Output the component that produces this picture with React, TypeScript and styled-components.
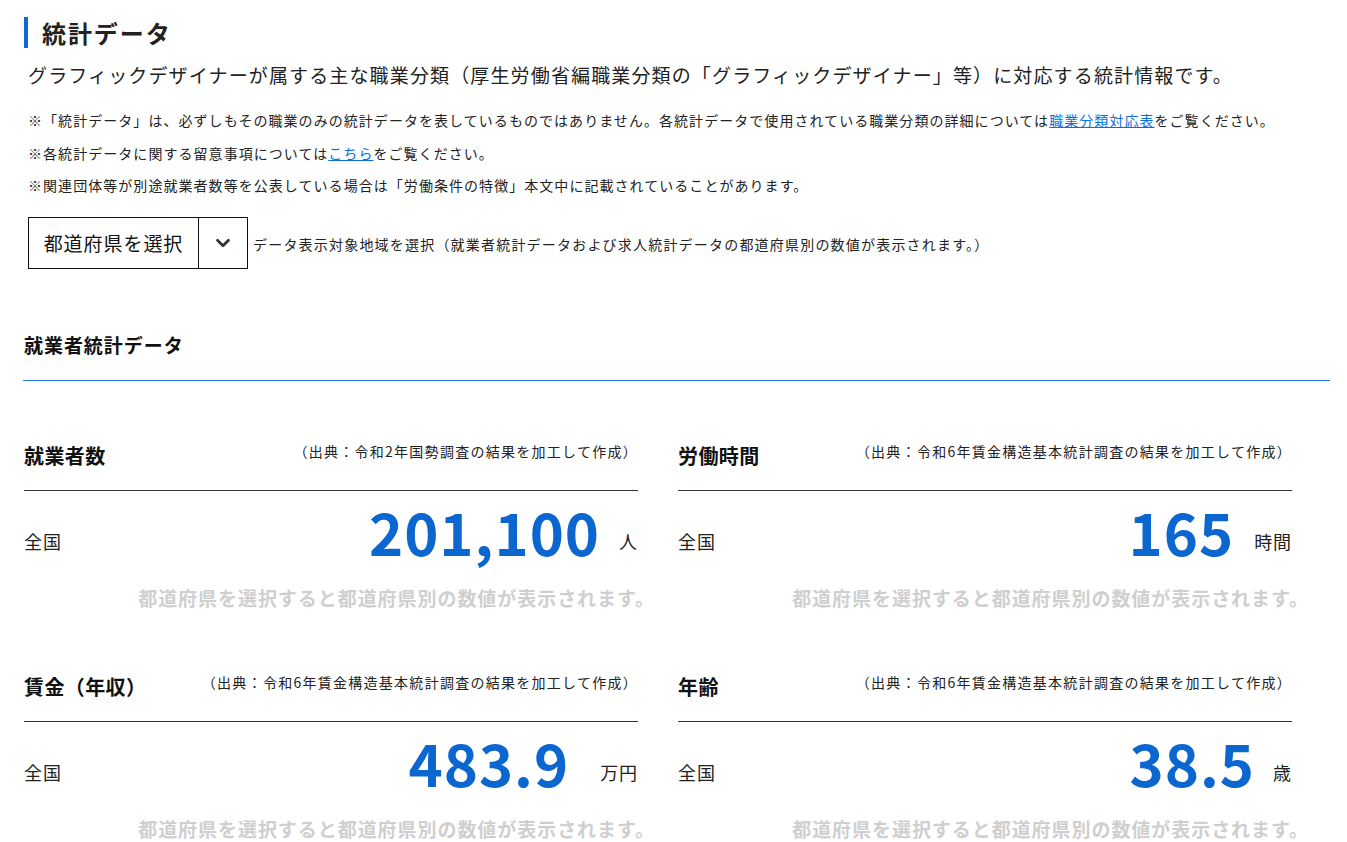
import React from 'react';
import styled, { createGlobalStyle } from 'styled-components';
import { ChevronDown } from 'lucide-react';

const GlobalStyle = createGlobalStyle`
  body {
    margin: 0;
    background: #fff;
    color: #333;
    font-family: "Noto Sans CJK JP", "Noto Sans", sans-serif;
  }
`;

const Page = styled.div`
  padding: 17px 17px 40px 23px;
`;

const Title = styled.h2`
  margin: 0 0 0 1px;
  padding-left: 14px;
  border-left: 4px solid #0b6bd3;
  font-size: 24px;
  font-weight: 700;
  line-height: 31px;
  letter-spacing: 0.08em;
  color: #222;
`;

const Intro = styled.div`
  padding-left: 5px;
`;

const Lead = styled.p`
  margin: 12px 0 0;
  font-size: 19px;
  line-height: 30px;
  letter-spacing: 0.06em;
  color: #222;
`;

const Notes = styled.ul`
  list-style: none;
  margin: 14px 0 0;
  padding: 0;
`;

const Note = styled.li`
  font-size: 14px;
  line-height: 32.5px;
  letter-spacing: 1.05px;
  color: #222;
`;

const Link = styled.a`
  color: #0a6fe0;
  text-decoration: underline;
`;

const SelectRow = styled.div`
  display: flex;
  align-items: center;
  gap: 5px;
  margin-top: 15px;
`;

const Select = styled.div`
  display: flex;
  height: 52px;
  box-sizing: border-box;
  border: 1px solid #111;
`;

const SelectLabel = styled.div`
  display: flex;
  align-items: center;
  justify-content: center;
  width: 169px;
  font-size: 19px;
  letter-spacing: 0.05em;
  color: #111;
`;

const SelectButton = styled.div`
  display: flex;
  align-items: center;
  justify-content: center;
  width: 48px;
  border-left: 1px solid #111;
  color: #333;
`;

const SelectHint = styled.span`
  font-size: 14px;
  letter-spacing: 1.2px;
  color: #222;
  padding-top: 3px;
`;

const SectionTitle = styled.h3`
  margin: 62px 0 0 1px;
  font-size: 19px;
  font-weight: 700;
  line-height: 28px;
  letter-spacing: 0.05em;
  color: #111;
`;

const SectionRule = styled.hr`
  margin: 21px 0 0;
  border: none;
  border-top: 1px solid #2a7be0;
`;

const Cards = styled.div`
  display: grid;
  grid-template-columns: 614px 614px;
  column-gap: 40px;
  row-gap: 59px;
  margin-top: 60px;
  padding-left: 1px;
`;

const Card = styled.section``;

const CardHead = styled.div`
  display: flex;
  justify-content: space-between;
  align-items: flex-start;
  padding-bottom: 19px;
  border-bottom: 1px solid #333;
`;

const CardTitle = styled.h4`
  margin: 0;
  font-size: 20px;
  font-weight: 700;
  line-height: 30px;
  letter-spacing: 0.02em;
  color: #111;
`;

const Source = styled.span`
  font-size: 14px;
  line-height: 21px;
  letter-spacing: 1.27px;
  color: #222;
`;

const ValueRow = styled.div`
  display: flex;
  justify-content: space-between;
  align-items: center;
  padding-top: 11px;
`;

const Area = styled.span`
  font-size: 18px;
  letter-spacing: 0.05em;
  color: #222;
`;

const Figure = styled.div<{ $gap: number }>`
  display: flex;
  align-items: center;
  gap: ${(p) => p.$gap}px;
`;

const Value = styled.span`
  font-size: 58px;
  font-weight: 700;
  line-height: 58px;
  padding-bottom: 20px;
  letter-spacing: 1px;
  color: #0b66d0;
`;

const Unit = styled.span`
  font-size: 18px;
  letter-spacing: 0.05em;
  color: #222;
`;

const Placeholder = styled.p`
  margin: 3px -17px 0 0;
  text-align: right;
  font-size: 19px;
  font-weight: 700;
  line-height: 30px;
  letter-spacing: 0.05em;
  color: #cfcfcf;
`;

type Stat = {
  title: string;
  source: string;
  value: string;
  unit: string;
  gap: number;
};

const stats: Stat[] = [
  { title: '就業者数', source: '（出典：令和2年国勢調査の結果を加工して作成）', value: '201,100', unit: '人', gap: 19 },
  { title: '労働時間', source: '（出典：令和6年賃金構造基本統計調査の結果を加工して作成）', value: '165', unit: '時間', gap: 20 },
  { title: '賃金（年収）', source: '（出典：令和6年賃金構造基本統計調査の結果を加工して作成）', value: '483.9', unit: '万円', gap: 31 },
  { title: '年齢', source: '（出典：令和6年賃金構造基本統計調査の結果を加工して作成）', value: '38.5', unit: '歳', gap: 18 },
];

const StatCard: React.FC<{ stat: Stat }> = ({ stat }) => (
  <Card>
    <CardHead>
      <CardTitle>{stat.title}</CardTitle>
      <Source>{stat.source}</Source>
    </CardHead>
    <ValueRow>
      <Area>全国</Area>
      <Figure $gap={stat.gap}>
        <Value>{stat.value}</Value>
        <Unit>{stat.unit}</Unit>
      </Figure>
    </ValueRow>
    <Placeholder>都道府県を選択すると都道府県別の数値が表示されます。</Placeholder>
  </Card>
);

const App: React.FC = () => {
  return (
    <>
      <GlobalStyle />
      <Page>
        <Title>統計データ</Title>
        <Intro>
          <Lead>
            グラフィックデザイナーが属する主な職業分類（厚生労働省編職業分類の「グラフィックデザイナー」等）に対応する統計情報です。
          </Lead>
          <Notes>
            <Note>
              ※「統計データ」は、必ずしもその職業のみの統計データを表しているものではありません。各統計データで使用されている職業分類の詳細については
              <Link href="#">職業分類対応表</Link>をご覧ください。
            </Note>
            <Note>
              ※各統計データに関する留意事項については<Link href="#">こちら</Link>をご覧ください。
            </Note>
            <Note>※関連団体等が別途就業者数等を公表している場合は「労働条件の特徴」本文中に記載されていることがあります。</Note>
          </Notes>
          <SelectRow>
            <Select>
              <SelectLabel>都道府県を選択</SelectLabel>
              <SelectButton>
                <ChevronDown size={22} strokeWidth={3} />
              </SelectButton>
            </Select>
            <SelectHint>
              データ表示対象地域を選択（就業者統計データおよび求人統計データの都道府県別の数値が表示されます。）
            </SelectHint>
          </SelectRow>
        </Intro>
        <SectionTitle>就業者統計データ</SectionTitle>
        <SectionRule />
        <Cards>
          {stats.map((s) => (
            <StatCard key={s.title} stat={s} />
          ))}
        </Cards>
      </Page>
    </>
  );
};

export default App;
